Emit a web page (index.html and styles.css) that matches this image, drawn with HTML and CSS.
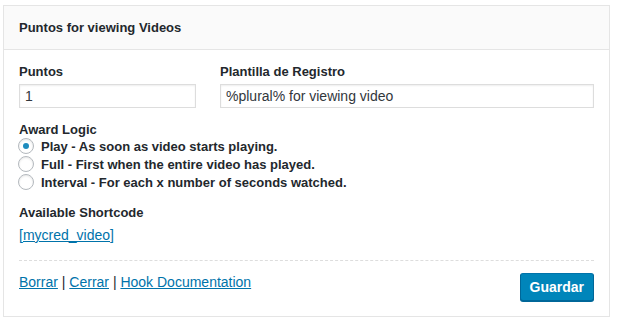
FILE: index.html
```html
<!DOCTYPE html>
<html lang="es">
<head>
    <meta charset="UTF-8">
    <title>Puntos for viewing Videos</title>
    <link rel="stylesheet" href="styles.css">
</head>
<body>
    <div class="widget">
        <div class="widget-top">
            <h3>Puntos for viewing Videos</h3>
        </div>
        <div class="widget-inside">
            <div class="row">
                <div class="field field-small">
                    <label for="puntos">Puntos</label>
                    <input type="text" id="puntos" value="1">
                </div>
                <div class="field field-wide">
                    <label for="plantilla">Plantilla de Registro</label>
                    <input type="text" id="plantilla" value="%plural% for viewing video">
                </div>
            </div>

            <div class="group">
                <div class="group-title">Award Logic</div>
                <label class="radio"><input type="radio" name="logic" checked> Play - As soon as video starts playing.</label>
                <label class="radio"><input type="radio" name="logic"> Full - First when the entire video has played.</label>
                <label class="radio"><input type="radio" name="logic"> Interval - For each x number of seconds watched.</label>
            </div>

            <div class="group">
                <div class="group-title">Available Shortcode</div>
                <a href="#" class="shortcode">[mycred_video]</a>
            </div>

            <div class="widget-control">
                <div class="links">
                    <a href="#">Borrar</a> | <a href="#">Cerrar</a> | <a href="#">Hook Documentation</a>
                </div>
                <button class="btn">Guardar</button>
            </div>
        </div>
    </div>
</body>
</html>
```

FILE: styles.css
```css
body {
    margin: 0;
    padding: 5px 7px 0 3px;
    background: #fff;
    font-family: "Liberation Sans", Arial, sans-serif;
    font-size: 13px;
    color: #23282d;
}
.widget {
    border: 1px solid #e5e5e5;
    background: #fff;
    height: 312px;
    box-sizing: border-box;
}
.widget-top {
    background: #fafafa;
    border-bottom: 1px solid #e5e5e5;
    height: 43px;
    display: flex;
    align-items: center;
    padding: 0 15px;
}
.widget-top h3 {
    margin: 0;
    font-size: 13px;
    font-weight: bold;
    color: #23282d;
}
.widget-inside {
    padding: 14px 15px 0 15px;
}
.row {
    display: flex;
    gap: 24px;
}
.field label {
    display: block;
    font-weight: bold;
    margin-bottom: 5px;
}
.field-small {
    width: 177px;
}
.field-wide {
    flex: 1;
}
.field input {
    box-sizing: border-box;
    width: 100%;
    height: 24px;
    border: 1px solid #ddd;
    box-shadow: inset 0 1px 2px rgba(0,0,0,0.07);
    padding: 2px 5px;
    font-family: inherit;
    font-size: 14px;
    color: #32373c;
    margin: 0;
}
.group {
    margin-top: 14px;
}
.group-title {
    font-weight: bold;
}
.radio {
    display: flex;
    align-items: center;
    font-weight: bold;
    height: 18px;
}
.radio input {
    appearance: none;
    width: 16px;
    height: 16px;
    border: 1px solid #b4b9be;
    border-radius: 50%;
    margin: 0 7px 0 -1px;
    box-shadow: inset 0 1px 2px rgba(0,0,0,0.1);
    background: #fff;
    display: grid;
    place-items: center;
}
.radio input:checked::before {
    content: "";
    width: 6px;
    height: 6px;
    border-radius: 50%;
    background: #1e8cbe;
}
.shortcode {
    display: inline-block;
    margin-top: 7px;
    font-size: 14px;
}
a {
    color: #0073aa;
}
.widget-control {
    margin-top: 17px;
    border-top: 1px dashed #ddd;
    padding-top: 12px;
    display: flex;
    justify-content: space-between;
    align-items: flex-start;
}
.links {
    color: #23282d;
    font-size: 14px;
    padding-top: 1px;
}
.btn {
    background: #0085ba;
    border: 1px solid #0073aa;
    border-color: #0073aa #006799 #006799;
    box-shadow: 0 1px 0 #006799;
    color: #fff;
    font-family: inherit;
    font-size: 14px;
    font-weight: bold;
    height: 28px;
    padding: 0 9px;
    border-radius: 3px;
    cursor: pointer;
}
.btn:hover {
    background: #008ec2;
}
```
